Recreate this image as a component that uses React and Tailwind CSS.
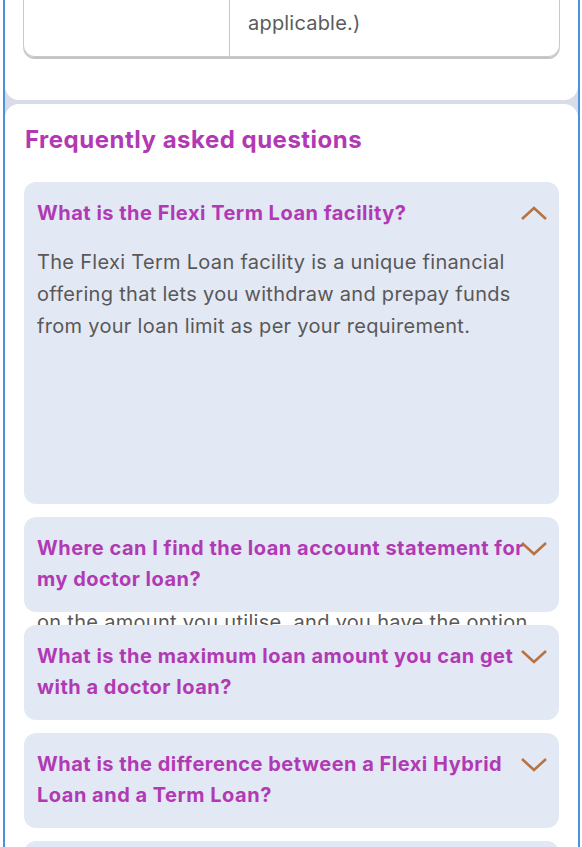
const faqs = [
  {
    q: 'Where can I find the loan account statement for my doctor loan?',
    leak: 'on the amount you utilise, and you have the option',
  },
  { q: 'What is the maximum loan amount you can get with a doctor loan?' },
  { q: 'What is the difference between a Flexi Hybrid Loan and a Term Loan?' },
];

function Chevron({ up }) {
  return (
    <svg width="28" height="16" viewBox="0 0 28 16" className="absolute right-[11px] top-[23px]">
      <path
        d={up ? 'M2 14 L14 3 L26 14' : 'M2 3 L14 14 L26 3'}
        fill="none"
        stroke="#b8733f"
        strokeWidth="2.6"
      />
    </svg>
  );
}

export default function App() {
  return (
    <div
      className="w-[582px] h-[847px] overflow-hidden bg-white pl-[3px] pr-[2px]"
      style={{ fontFamily: 'Inter, "Noto Sans", sans-serif' }}
    >
      <div className="h-full border-x-2 border-[#4a92dd] bg-[#d8dce9] flex flex-col gap-[4px]">
        {/* top card, cut off */}
        <div className="shrink-0 bg-white rounded-b-[14px] h-[100px] px-[18px] pb-[43px] flex">
          <div className="flex-1 flex border-x border-b border-[#c9c9c9] rounded-b-[12px] shadow-[0_2px_0_#c4c4c4]">
            <div className="w-[206px] border-r border-[#c9c9c9]" />
            <div className="flex-1 flex flex-col justify-end pl-[18px] pb-[17px] text-[20px] text-[#5b5b5b] leading-[32px] tracking-[0.2px]">
              applicable.)
            </div>
          </div>
        </div>

        {/* FAQ card */}
        <div className="flex-1 bg-white rounded-t-[14px] px-[19px] pt-[21px]">
          <h2 className="pl-[1px] text-[24px] font-bold text-[#b13ab4] leading-[30px] tracking-[0.5px]">
            Frequently asked questions
          </h2>

          <div className="mt-[27px] relative bg-[#e3e8f5] rounded-[12px] h-[322px] pl-[13px] pr-[13px] pt-[16px]">
            <div className="text-[20px] font-bold text-[#b13ab4] leading-[31px] tracking-[0.5px]">
              What is the Flexi Term Loan facility?
            </div>
            <Chevron up />
            <p className="mt-[17px] text-[20px] text-[#585858] leading-[32px] tracking-[0.3px]">
              The Flexi Term Loan facility is a unique financial offering that lets you withdraw and prepay funds from your loan limit as per your requirement.
            </p>
          </div>

          <div className="flex flex-col gap-[13px] mt-[13px]">
            {faqs.map((f, i) => (
              <div key={f.q} className="relative">
                <div className="relative z-10 bg-[#e3e8f5] rounded-[12px] h-[95px] pl-[13px] pr-[13px] pt-[16px]">
                  <div className="text-[20px] font-bold text-[#b13ab4] leading-[31px] tracking-[0.5px]">
                    {f.q}
                  </div>
                  <Chevron />
                </div>
                {f.leak && (
                  <div className="absolute left-[13px] top-[95px] h-[13px] overflow-hidden whitespace-nowrap text-[20px] text-[#585858] leading-[20px] tracking-[0.3px]">
                    <div>{f.leak}</div>
                  </div>
                )}
              </div>
            ))}
            <div className="bg-[#e3e8f5] rounded-[12px] h-[95px]" />
          </div>
        </div>
      </div>
    </div>
  );
}
